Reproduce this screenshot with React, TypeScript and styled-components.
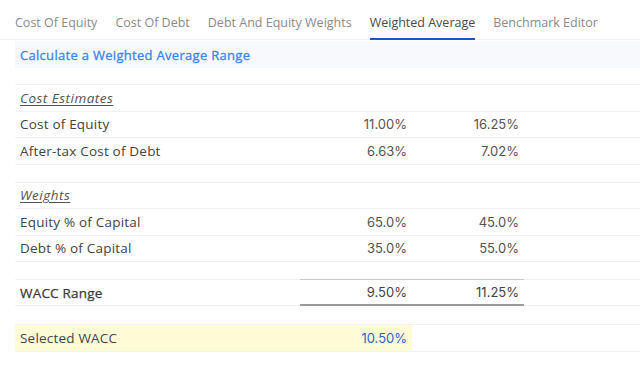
import React from 'react';
import styled, { createGlobalStyle } from 'styled-components';

const GlobalStyle = createGlobalStyle`
  body {
    margin: 0;
    background: #fff;
    font-family: 'Open Sans', 'Liberation Sans', sans-serif;
  }
`;

const tabs = [
  'Cost Of Equity',
  'Cost Of Debt',
  'Debt And Equity Weights',
  'Weighted Average',
  'Benchmark Editor',
];

type Row =
  | { kind: 'section'; label: string }
  | { kind: 'spacer'; height: number }
  | { kind: 'value'; label: string; low: string; high: string };

const rows: Row[] = [
  { kind: 'section', label: 'Cost Estimates' },
  { kind: 'value', label: 'Cost of Equity', low: '11.00%', high: '16.25%' },
  { kind: 'value', label: 'After-tax Cost of Debt', low: '6.63%', high: '7.02%' },
  { kind: 'spacer', height: 18 },
  { kind: 'section', label: 'Weights' },
  { kind: 'value', label: 'Equity % of Capital', low: '65.0%', high: '45.0%' },
  { kind: 'value', label: 'Debt % of Capital', low: '35.0%', high: '55.0%' },
];

export default function App() {
  return (
    <Page>
      <GlobalStyle />
      <TabBar>
        {tabs.map(t => (
          <Tab key={t} active={t === 'Weighted Average'}>
            {t}
          </Tab>
        ))}
      </TabBar>
      <Content>
        <Banner>Calculate a Weighted Average Range</Banner>
        <Table>
          {rows.map((r, i) => {
            if (r.kind === 'spacer') {
              return <Spacer key={i} style={{ height: r.height }} />;
            }
            if (r.kind === 'section') {
              return (
                <TableRow key={i}>
                  <SectionLabel>{r.label}</SectionLabel>
                  <Cell />
                  <Cell />
                  <Cell />
                </TableRow>
              );
            }
            return (
              <TableRow key={i}>
                <Label>{r.label}</Label>
                <Value>{r.low}</Value>
                <Value>{r.high}</Value>
                <Cell />
              </TableRow>
            );
          })}
        </Table>
        <TotalRow>
          <TotalLabel>WACC Range</TotalLabel>
          <TotalValue>9.50%</TotalValue>
          <TotalValue>11.25%</TotalValue>
          <Cell />
        </TotalRow>
        <SelectedRow>
          <SelectedLabel>Selected WACC</SelectedLabel>
          <SelectedValue>10.50%</SelectedValue>
          <Cell />
          <Cell />
        </SelectedRow>
      </Content>
    </Page>
  );
}

const Page = styled.div`
  width: 640px;
  height: 365px;
  overflow: hidden;
  background: #fff;
`;

const TabBar = styled.div`
  display: flex;
  gap: 18px;
  height: 40px;
  padding-left: 15px;
  border-bottom: 1px solid #f0f1f4;
  box-sizing: border-box;
`;

const Tab = styled.div<{ active?: boolean }>`
  display: flex;
  align-items: center;
  height: 40px;
  box-sizing: border-box;
  padding-top: 6px;
  font-size: 12.5px;
  color: ${p => (p.active ? '#4a4a4a' : '#8a8a8a')};
  border-bottom: 2px solid ${p => (p.active ? '#1f54c8' : 'transparent')};
`;

const Content = styled.div`
  padding-left: 15px;
`;

const Banner = styled.div`
  height: 27px;
  margin-top: 1px;
  display: flex;
  align-items: center;
  padding-left: 5px;
  background: #f7f9fd;
  color: #3d84f0;
  font-size: 13px;
  letter-spacing: 0.3px;
  -webkit-text-stroke: 0.3px #3d84f0;
`;

const Table = styled.div`
  margin-top: 16px;
  border-top: 1px solid #f1f2f6;
`;

const grid = `
  display: grid;
  grid-template-columns: 285px 112px 112px 1fr;
  align-items: center;
`;

const TableRow = styled.div`
  ${grid};
  height: 25.5px;
  border-bottom: 1px solid #f1f2f6;
`;

const Spacer = styled.div`
  border-bottom: 1px solid #f1f2f6;
  box-sizing: border-box;
`;

const Cell = styled.div``;

const Label = styled.div`
  padding-left: 5px;
  font-size: 13.5px;
  letter-spacing: 0.2px;
  color: #444;
`;

const SectionLabel = styled(Label)`
  font-style: italic;
  text-decoration: underline;
  text-underline-offset: 2px;
  letter-spacing: 0.5px;
  color: #555;
`;

const Value = styled.div`
  text-align: right;
  padding-right: 5px;
  font-family: Inter, 'Liberation Sans', sans-serif;
  font-size: 13px;
  color: #555;
`;

const TotalRow = styled.div`
  ${grid};
  margin-top: 17px;
  height: 25px;
  border-top: 1px solid #f1f2f6;
  border-bottom: 1px solid #f1f2f6;
`;

const TotalLabel = styled(Label)`
  color: #3a3a3a;
  -webkit-text-stroke: 0.25px #3a3a3a;
`;

const TotalValue = styled(Value)`
  height: 27px;
  box-sizing: border-box;
  display: flex;
  align-items: center;
  justify-content: flex-end;
  margin: -1px 0;
  border-top: 1px solid #c9c9c9;
  border-bottom: 2px solid #9a9a9a;
  color: #444;
`;

const SelectedRow = styled.div`
  ${grid};
  margin-top: 18px;
  height: 25.5px;
  border-top: 1px solid #f1f2f6;
  border-bottom: 1px solid #f1f2f6;
`;

const SelectedLabel = styled(Label)`
  height: 100%;
  display: flex;
  align-items: center;
  background: #fefcd7;
`;

const SelectedValue = styled(Value)`
  height: 100%;
  display: flex;
  align-items: center;
  justify-content: flex-end;
  background: #fefcd7;
  color: #2f63c8;
`;
